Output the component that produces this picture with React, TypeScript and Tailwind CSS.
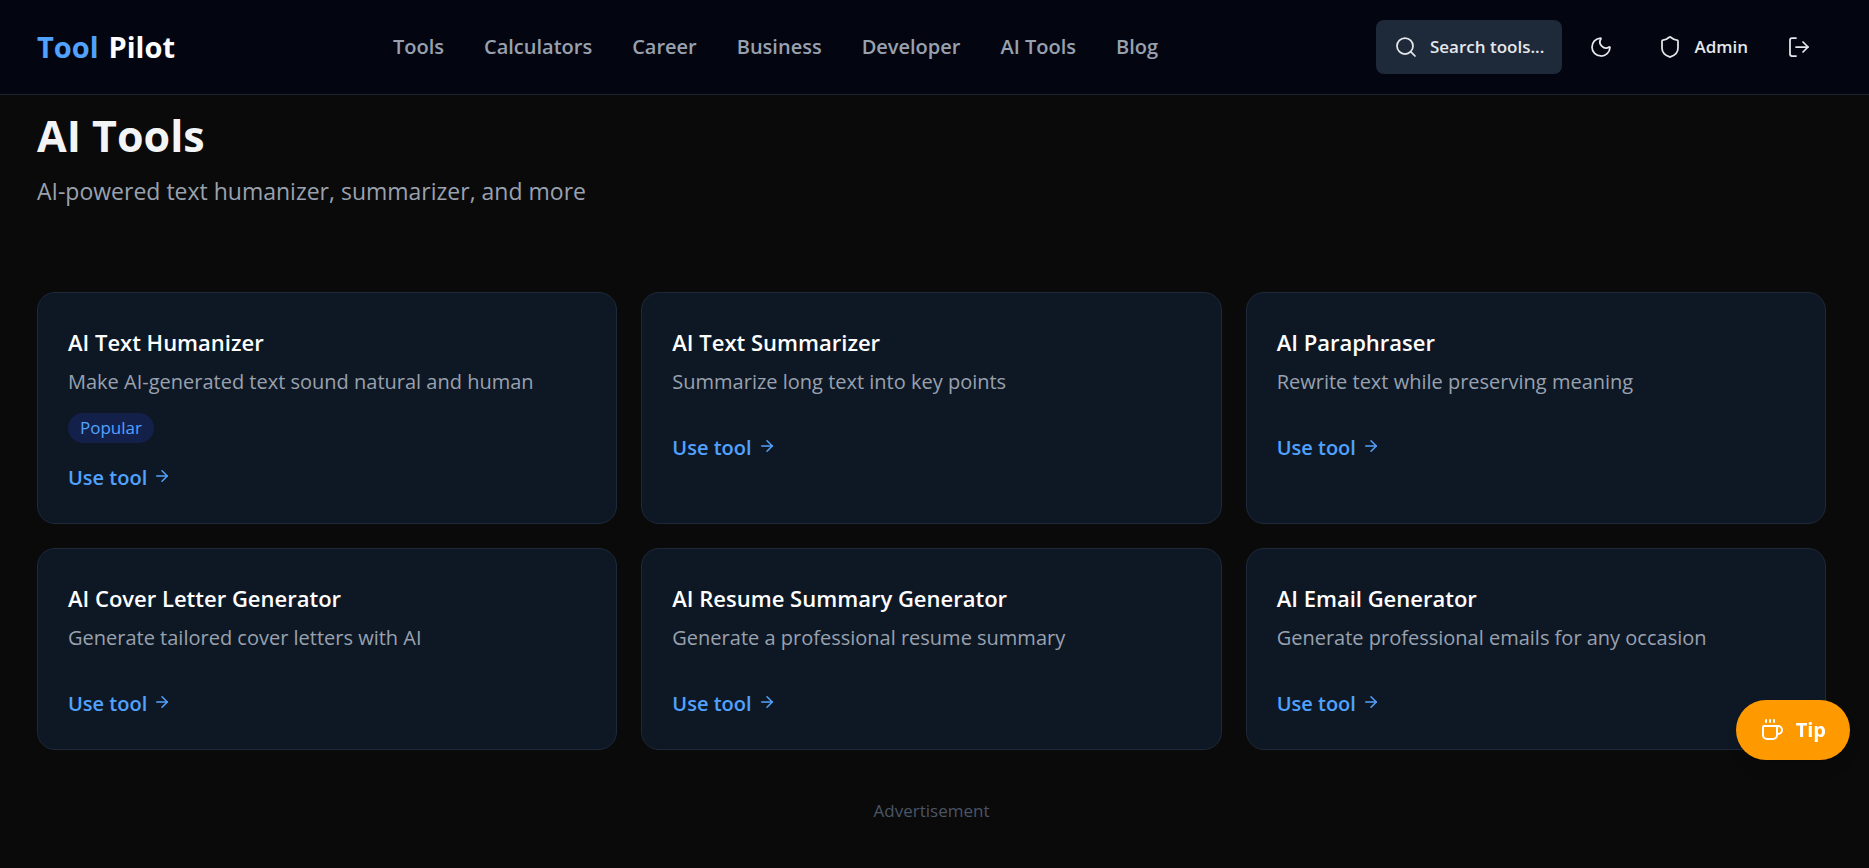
import { ArrowRight, Coffee, LogOut, Moon, Search, Shield } from 'lucide-react';

type Tool = {
  slug: string;
  name: string;
  description: string;
  popular?: boolean;
};

const navLinks = [
  { href: '/tools', label: 'Tools' },
  { href: '/calculators', label: 'Calculators' },
  { href: '/career', label: 'Career' },
  { href: '/business', label: 'Business' },
  { href: '/developer', label: 'Developer' },
  { href: '/ai-tools', label: 'AI Tools' },
  { href: '/blog', label: 'Blog' },
];

const tools: Tool[] = [
  {
    slug: 'ai-text-humanizer',
    name: 'AI Text Humanizer',
    description: 'Make AI-generated text sound natural and human',
    popular: true,
  },
  {
    slug: 'ai-text-summarizer',
    name: 'AI Text Summarizer',
    description: 'Summarize long text into key points',
  },
  {
    slug: 'ai-paraphraser',
    name: 'AI Paraphraser',
    description: 'Rewrite text while preserving meaning',
  },
  {
    slug: 'ai-cover-letter-generator',
    name: 'AI Cover Letter Generator',
    description: 'Generate tailored cover letters with AI',
  },
  {
    slug: 'ai-resume-summary-generator',
    name: 'AI Resume Summary Generator',
    description: 'Generate a professional resume summary',
  },
  {
    slug: 'ai-email-generator',
    name: 'AI Email Generator',
    description: 'Generate professional emails for any occasion',
  },
];

function Header() {
  return (
    <header className="border-b border-[#1d2130] bg-[#030611]">
      <div className="flex h-[94px] items-center justify-between pl-[37px] pr-[43px]">
        <a href="/" className="flex items-center gap-[10px] text-[29px] font-bold">
          <span className="text-blue-400">Tool</span>
          <span className="text-white">Pilot</span>
        </a>

        <nav className="flex items-center gap-10">
          {navLinks.map((link) => (
            <a
              key={link.href}
              href={link.href}
              className="text-[20px] font-semibold text-gray-400 hover:text-white"
            >
              {link.label}
            </a>
          ))}
        </nav>

        <div className="flex items-center gap-3 text-gray-200">
          <button
            type="button"
            className="flex h-[54px] items-center gap-3 rounded-lg bg-gray-800 px-[18px] text-[17px] font-semibold"
          >
            <Search className="h-6 w-6" strokeWidth={1.75} />
            Search tools...
          </button>
          <button type="button" aria-label="Toggle theme" className="p-[15px]">
            <Moon className="h-6 w-6" strokeWidth={1.75} />
          </button>
          <a href="/admin" className="flex items-center gap-3 pl-[18px] pr-3 text-[17px] font-semibold">
            <Shield className="h-6 w-6" strokeWidth={1.75} />
            Admin
          </a>
          <button type="button" aria-label="Log out" className="p-[15px]">
            <LogOut className="h-6 w-6" strokeWidth={1.75} />
          </button>
        </div>
      </div>
    </header>
  );
}

function ToolCard({ tool }: { tool: Tool }) {
  return (
    <div className="flex flex-col items-start rounded-[18px] border border-gray-800 bg-[#0e1825] p-[30px]">
      <h2 className="text-[22px] leading-[38px] font-semibold text-white">{tool.name}</h2>
      <p className="mt-[5px] mb-[15px] text-[20px] leading-[32px] text-gray-400">{tool.description}</p>
      {tool.popular && (
        <span className="rounded-full bg-[#13204a] px-3 text-[17px] leading-[30px] text-blue-400">
          Popular
        </span>
      )}
      <a
        href={`/ai-tools/${tool.slug}`}
        className="mt-5 text-[20px] leading-[30px] font-semibold text-blue-400"
      >
        Use tool
        <ArrowRight className="ml-[6px] inline h-[18px] w-[18px] align-baseline" strokeWidth={2} />
      </a>
    </div>
  );
}

export default function App() {
  return (
    <div className="min-h-screen bg-[#0a0a0a] font-['Open_Sans','Noto_Sans',sans-serif]">
      <Header />

      <main className="pt-4 pb-9 pl-[37px] pr-[43px]">
        <h1 className="text-[43px] leading-[50px] font-bold text-gray-100">AI Tools</h1>
        <p className="mt-3 text-[23px] leading-[36px] text-gray-400">
          AI-powered text humanizer, summarizer, and more
        </p>

        <div className="mt-[83px] grid grid-cols-3 gap-6">
          {tools.map((tool) => (
            <ToolCard key={tool.slug} tool={tool} />
          ))}
        </div>

        <p className="mt-12 text-center text-[17px] leading-[26px] text-gray-600">Advertisement</p>
      </main>

      <button
        type="button"
        className="fixed right-[19px] bottom-[108px] flex h-[60px] items-center gap-3 rounded-full bg-amber-500 px-6 text-[20px] font-bold text-white shadow-lg"
      >
        <Coffee className="h-6 w-6" strokeWidth={2} />
        Tip
      </button>
    </div>
  );
}
